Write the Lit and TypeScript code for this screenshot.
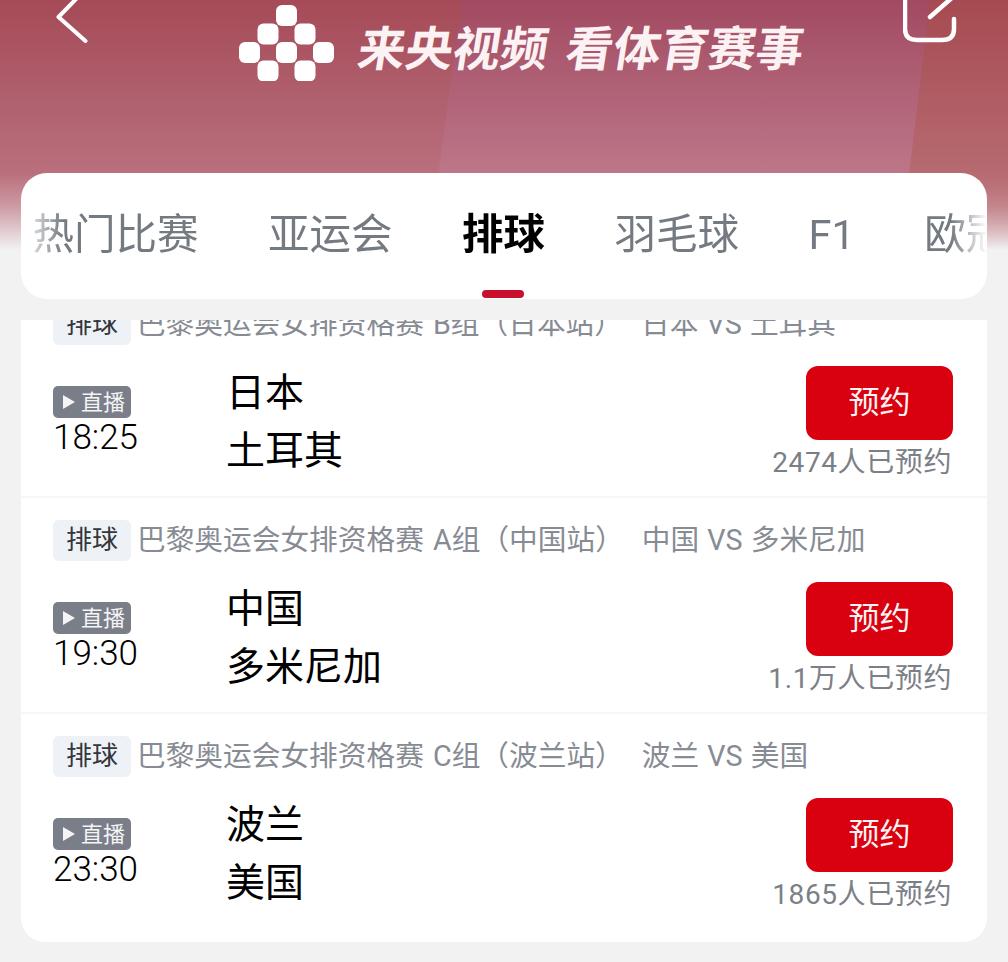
import { LitElement, html, css, svg } from "lit";
import { customElement } from "lit/decorators.js";

const TABS = ["热门比赛", "亚运会", "排球", "羽毛球", "F1", "欧冠"];

const MATCHES = [
  {
    title: "巴黎奥运会女排资格赛 B组（日本站）",
    versus: "日本 VS 土耳其",
    time: "18:25",
    teams: ["日本", "土耳其"],
    count: "2474人已预约",
  },
  {
    title: "巴黎奥运会女排资格赛 A组（中国站）",
    versus: "中国 VS 多米尼加",
    time: "19:30",
    teams: ["中国", "多米尼加"],
    count: "1.1万人已预约",
  },
  {
    title: "巴黎奥运会女排资格赛 C组（波兰站）",
    versus: "波兰 VS 美国",
    time: "23:30",
    teams: ["波兰", "美国"],
    count: "1865人已预约",
  },
];

// logo cells, col/row on a grid; cells overlap a little at the corners
const LOGO_CELLS = [
  [2, 0],
  [1, 1],
  [3, 1],
  [0, 2],
  [2, 2],
  [4, 2],
  [1, 3],
  [3, 3],
];

@customElement("app-root")
export class AppRoot extends LitElement {
  static styles = css`
    :host {
      display: block;
      width: 1008px;
      height: 962px;
      overflow: hidden;
      background: #f2f2f3;
      font-family: Roboto, "Noto Sans CJK SC", sans-serif;
    }

    /* header */
    .hero {
      position: relative;
      height: 250px;
      overflow: hidden;
      background: linear-gradient(
        180deg,
        #a64a57 0%,
        #b0606e 40%,
        #b96f7c 69%,
        #cc98a1 82%,
        #f2f2f3 100%
      );
    }
    .band {
      position: absolute;
      inset: 0;
      background: linear-gradient(
        180deg,
        rgba(160, 74, 100, 0.75) 0,
        rgba(190, 120, 140, 0.8) 173px,
        rgba(190, 120, 140, 0) 250px
      );
      clip-path: polygon(462px 0, 930px 0, 900px 250px, 428px 250px);
    }
    .edge {
      position: absolute;
      inset: 0;
      background: linear-gradient(
        180deg,
        rgba(166, 74, 78, 0.7) 0,
        rgba(182, 104, 108, 0.7) 173px,
        rgba(182, 104, 108, 0) 250px
      );
      clip-path: polygon(930px 0, 1008px 0, 1008px 250px, 900px 250px);
    }
    .nav {
      position: relative;
      display: grid;
      grid-template-columns: 183px 1fr auto;
      align-items: start;
      padding: 0 45px 0 56px;
    }
    .back,
    .share {
      display: block;
      fill: none;
      stroke: #fff;
      stroke-linecap: round;
      stroke-linejoin: round;
    }
    .brand {
      display: flex;
      align-items: flex-start;
      gap: 25px;
      padding-top: 5px;
    }
    .logo {
      display: block;
      fill: #fff;
    }
    .slogan {
      font-family: "Noto Sans CJK SC", sans-serif;
      font-size: 47.5px;
      font-weight: 700;
      line-height: 82px;
      white-space: nowrap;
      word-spacing: 7px;
      color: #fcf1f3;
      transform: skewX(-9deg);
    }

    /* tabs */
    .tabs {
      position: relative;
      height: 126px;
      margin: -77px 21px 0;
      border-radius: 26px;
      background: #fff;
      overflow: hidden;
    }
    .tab-scroll {
      display: flex;
      gap: 69.5px;
      height: 100%;
      padding-left: 11.5px;
      white-space: nowrap;
      -webkit-mask-image: linear-gradient(
        90deg,
        transparent 0,
        #000 42px,
        #000 calc(100% - 36px),
        transparent 100%
      );
      mask-image: linear-gradient(
        90deg,
        transparent 0,
        #000 42px,
        #000 calc(100% - 36px),
        transparent 100%
      );
    }
    .tab {
      position: relative;
      flex: none;
      font-size: 41.5px;
      line-height: 124px;
      color: #747a82;
    }
    .tab.active {
      font-weight: 700;
      color: #000;
    }
    .tab.active::after {
      content: "";
      position: absolute;
      left: 20px;
      right: 21px;
      bottom: 1px;
      height: 8px;
      border-radius: 4px;
      background: #c8102e;
    }

    /* match list */
    .list {
      height: 622px;
      margin: 21px 21px 0;
      border-radius: 0 0 24px 24px;
      background: #fff;
      overflow: hidden;
    }
    .rows {
      margin-top: -38px;
    }
    .row {
      box-sizing: border-box;
      height: 216px;
      padding: 22px 34px 0 32px;
      border-bottom: 2px solid #f6f6f7;
    }
    .row:last-child {
      border-bottom: none;
    }
    .head {
      display: flex;
      align-items: center;
      height: 41px;
      white-space: nowrap;
    }
    .tag {
      flex: none;
      width: 78px;
      height: 41px;
      margin-right: 6px;
      border-radius: 6px;
      background: #eef1f6;
      font-size: 26px;
      line-height: 40px;
      text-align: center;
      color: #33363b;
    }
    .title {
      margin-top: -6px;
      font-size: 28.7px;
      word-spacing: 2px;
      color: #878b93;
    }
    .versus {
      margin-top: -6px;
      margin-left: 18px;
      font-size: 28.7px;
      word-spacing: 1px;
      color: #878b93;
    }
    .body {
      display: flex;
      align-items: flex-start;
      margin-top: 18px;
    }
    .when {
      flex: none;
      width: 175px;
      padding-top: 23px;
    }
    .live {
      display: flex;
      align-items: center;
      box-sizing: border-box;
      width: 78px;
      height: 32px;
      padding-left: 10px;
      border-radius: 5px;
      background: #7a7e88;
      font-size: 22px;
      line-height: 33px;
      color: #f4f4f6;
    }
    .live svg {
      display: block;
      margin-right: 6px;
      fill: #f4f4f6;
    }
    .time {
      margin-top: -1px;
      font-size: 35px;
      font-weight: 300;
      line-height: 42px;
      color: #000;
    }
    .teams {
      flex: 1;
      margin-left: -2px;
      padding-top: 1px;
      font-size: 39px;
      line-height: 58px;
      color: #000;
    }
    .action {
      display: flex;
      flex-direction: column;
      align-items: flex-end;
      padding-top: 3px;
    }
    .book {
      width: 147px;
      height: 74px;
      border-radius: 12px;
      background: #d9000f;
      font-size: 31px;
      line-height: 73px;
      text-align: center;
      color: #fdf3f3;
    }
    .count {
      padding-right: 1px;
      font-size: 28px;
      line-height: 46px;
      letter-spacing: 0.6px;
      white-space: nowrap;
      color: #7b8087;
    }
  `;

  renderHeader() {
    return html`
      <div class="hero">
        <div class="band"></div>
        <div class="edge"></div>
        <div class="nav">
          <svg class="back" width="34" height="46" viewBox="0 0 34 46" stroke-width="4">
            <path d="M23-4 2.500 17 29.500 41" />
          </svg>
          <div class="brand">
            <svg class="logo" width="95" height="76" viewBox="0 0 95 76">
              ${LOGO_CELLS.map(
                ([col, row]) => svg`<rect
                  x=${col * 18.5}
                  y=${row * 18.5}
                  width="21"
                  height="21"
                  rx="6"
                />`
              )}
            </svg>
            <div class="slogan">来央视频 看体育赛事</div>
          </div>
          <svg class="share" width="60" height="46" viewBox="0 0 60 46" stroke-width="4.500">
            <path d="M25-8H10Q2-8 2 0V29Q2 40 14 40H39Q51 40 51 29V19" />
            <path d="M27 17 51-4" />
          </svg>
        </div>
      </div>
    `;
  }

  renderTabs() {
    return html`
      <div class="tabs">
        <div class="tab-scroll">
          ${TABS.map(
            (tab) =>
              html`<div class="tab ${tab === "排球" ? "active" : ""}">${tab}</div>`
          )}
        </div>
      </div>
    `;
  }

  renderRow(match: (typeof MATCHES)[number]) {
    return html`
      <div class="row">
        <div class="head">
          <span class="tag">排球</span>
          <span class="title">${match.title}</span>
          <span class="versus">${match.versus}</span>
        </div>
        <div class="body">
          <div class="when">
            <div class="live">
              <svg width="12" height="14" viewBox="0 0 12 14"><path d="M0 0 12 7 0 14Z" /></svg>
              直播
            </div>
            <div class="time">${match.time}</div>
          </div>
          <div class="teams">${match.teams.map((t) => html`<div>${t}</div>`)}</div>
          <div class="action">
            <div class="book">预约</div>
            <div class="count">${match.count}</div>
          </div>
        </div>
      </div>
    `;
  }

  render() {
    return html`
      ${this.renderHeader()} ${this.renderTabs()}
      <div class="list">
        <div class="rows">${MATCHES.map((m) => this.renderRow(m))}</div>
      </div>
    `;
  }
}
